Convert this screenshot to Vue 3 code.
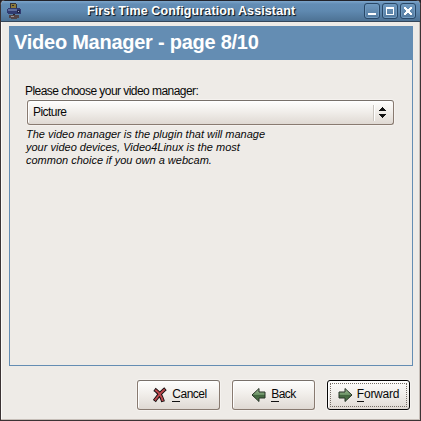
<script setup>
const hint = [
  'The video manager is the plugin that will manage',
  'your video devices, Video4Linux is the most',
  'common choice if you own a webcam.',
]
</script>

<template>
  <div class="window">
    <header class="titlebar">
      <svg class="app-icon" width="16" height="18" viewBox="0 0 16 18" shape-rendering="crispEdges">
        <path d="M4 0h6v1h1v5H4z" fill="#34343c" />
        <path d="M5 1h5v4H5z" fill="#8c7a3c" />
        <path d="M6 2h2v1H6z" fill="#292b35" />
        <path d="M1 6h1V5h12v1h1v5H2v-1H1z" fill="#303b70" />
        <path d="M2 6h9v2H2z" fill="#5d6c9c" />
        <path d="M11 7h3v3h-3z" fill="#202548" />
        <path d="M12 8h1v1h-1z" fill="#a0a8c8" />
        <path d="M7 11h2v3H7z" fill="#29262b" />
        <path d="M3 12h10v3h-2v1H5v-1H3z" fill="#514549" />
        <path d="M5 13h3v1H5z" fill="#a19291" />
      </svg>
      <h1 class="title"><span>First Time Configuration Assistant</span></h1>
      <div class="controls">
        <button class="control" aria-label="Minimize">
          <svg width="14" height="14"><path d="M3 9h8v2H3z" fill="#fff" /></svg>
        </button>
        <button class="control" aria-label="Maximize">
          <svg width="14" height="14"><path d="M3 3h8v8H3zM4 5v5h6V5z" fill="#fff" fill-rule="evenodd" /></svg>
        </button>
        <button class="control" aria-label="Close">
          <svg width="14" height="14"><path d="M3 3h2v1h1v1h2V4h1V3h2v2h-1v1H9v2h1v1h1v2H9v-1H8V9H6v1H5v1H3V9h1V8h1V6H4V5H3z" fill="#fff" /></svg>
        </button>
      </div>
    </header>

    <main class="panel">
      <h2 class="heading"><span>Video Manager - page 8/10</span></h2>
      <section class="content">
        <label class="label"><span>Please choose your video manager:</span></label>
        <button class="combo">
          <span class="value">Picture</span>
          <span class="arrows">
            <svg width="7" height="11" shape-rendering="crispEdges">
              <path d="M3 0h1v1h1v1h1v1h1v1H0V3h1V2h1V1h1zM0 7h7v1H6v1H5v1H4v1H3v-1H2V9H1V8H0z" fill="#111" />
            </svg>
          </span>
        </button>
        <p class="hint"><span v-for="line in hint" :key="line">{{ line }}</span></p>
      </section>
    </main>

    <footer class="actions">
      <button class="action cancel">
        <svg width="14" height="16" viewBox="0 0 14 16">
          <path d="M3 3.5C5 5 8 8 9.5 13M11 3C8.5 5 5 9 2.5 12.5" fill="none" stroke="#171011" stroke-width="3.8" stroke-linecap="square" />
          <path d="M3 3.5C5 5 8 8 9.5 13M11 3C8.5 5 5 9 2.5 12.5" fill="none" stroke="#bd484c" stroke-width="2" stroke-linecap="square" />
        </svg>
        <span class="text"><u>C</u>ancel</span>
      </button>
      <button class="action back">
        <svg width="15" height="16" viewBox="0 0 15 16">
          <defs><linearGradient id="green-back" x2="0" y2="1"><stop stop-color="#a4c19a" /><stop offset=".5" stop-color="#699063" /><stop offset=".51" stop-color="#42663f" /><stop offset="1" stop-color="#557c4d" /></linearGradient></defs>
          <path d="M1 8l7-6.5V5h6v6H8v3.5z" fill="url(#green-back)" stroke="#263326" />
        </svg>
        <span class="text"><u>B</u>ack</span>
      </button>
      <button class="action forward">
        <svg width="15" height="16" viewBox="0 0 15 16">
          <defs><linearGradient id="green-forward" x2="0" y2="1"><stop stop-color="#a4c19a" /><stop offset=".5" stop-color="#699063" /><stop offset=".51" stop-color="#42663f" /><stop offset="1" stop-color="#557c4d" /></linearGradient></defs>
          <path d="M14 8L7 1.5V5H1v6h6v3.5z" fill="url(#green-forward)" stroke="#263326" />
        </svg>
        <span class="text"><u>F</u>orward</span>
      </button>
    </footer>
  </div>
</template>

<style>
body { margin: 0; background: #25232a; }
</style>

<style scoped>
* { box-sizing: border-box; }
.window {
  width: 421px;
  height: 421px;
  display: flex;
  flex-direction: column;
  border: 1px solid #3b3334;
  border-top: 0;
  border-radius: 5px 5px 0 0;
  background: #eeebe7;
  box-shadow: inset -1px -1px #c6beb8, inset 1px 0 #fbfaf8;
  color: #080808;
  font: 12px/13px "Liberation Sans", Arial, sans-serif;
  overflow: hidden;
}
button { margin: 0; font: inherit; color: inherit; }
svg { display: block; flex: none; }
.titlebar {
  flex: none;
  height: 22px;
  display: flex;
  padding: 2px 4px 0 5px;
  border-top: 1px solid #22232a;
  border-bottom: 1px solid #34465a;
  background: linear-gradient(#7ca5cb, #638db5 3px, #5f89b0 10px, #4d7294);
}
.title {
  flex: 1;
  margin: 0;
  padding: 0 0 0 65px;
  color: #fff;
  font: bold 12.5px/17px "Liberation Sans", Arial, sans-serif;
  letter-spacing: 0.12px;
  text-shadow: 1px 1px 1px #14202c, 1px 1px #26384a;
  white-space: nowrap;
}
.controls { display: flex; gap: 2px; }
.control {
  width: 16px;
  height: 16px;
  padding: 0;
  border: 1px solid #294867;
  border-radius: 3px;
  background: linear-gradient(#6f99c0, #547b9f);
  box-shadow: inset 0 0 0 1px #6f99bf;
}
.panel {
  flex: none;
  width: 404px;
  height: 340px;
  margin: 4px 0 0 8px;
  border: 1px solid #648db3;
}
.heading {
  height: 33px;
  margin: 0;
  padding-left: 4px;
  background: #648db3;
  color: #fff;
  font: bold 20px/31px "Liberation Sans", Arial, sans-serif;
  letter-spacing: -0.25px;
  white-space: nowrap;
}
.content { padding: 24px 17px 0 16px; }
.label { display: block; height: 16px; margin-left: -1px; line-height: 14px; letter-spacing: -0.55px; white-space: nowrap; }
.combo {
  width: 367px;
  height: 25px;
  display: flex;
  align-items: center;
  margin-left: 1px;
  padding: 0 7px 0 5px;
  border: 1px solid #887a70;
  border-top-color: #77706a;
  border-radius: 3px;
  background: linear-gradient(#fefefd, #f0ede9 50%, #dfd9d3);
  box-shadow: 0 0 0 1px #f5f2ef, inset 1px 1px #fff;
}
.value { flex: 1; text-align: left; letter-spacing: -0.55px; }
.arrows {
  height: 16px;
  display: flex;
  align-items: center;
  padding-left: 5px;
  border-left: 1px solid #c9c4be;
  box-shadow: inset 1px 0 #fff;
}
.hint {
  display: flex;
  flex-direction: column;
  align-items: flex-start;
  margin: 3px 0 0;
  font: italic 11px/13px "Liberation Sans", Arial, sans-serif;
  white-space: nowrap;
}
.actions { display: flex; gap: 12px; padding: 14px 0 0 136px; }
.action {
  width: 83px;
  height: 30px;
  display: flex;
  align-items: center;
  justify-content: center;
  padding: 0 0 2px;
  border: 1px solid #887a70;
  border-top-color: #77706a;
  border-radius: 3px;
  background: linear-gradient(#fefefd, #f0ede9 50%, #dfd9d3);
  box-shadow: 0 0 0 1px #f5f2ef, inset 1px 1px #fff;
  gap: 5px;
}
.action svg { margin-top: 2px; }
.text { letter-spacing: -0.5px; }
.cancel { padding-left: 3px; }
u { text-decoration: none; border-bottom: 1px solid #111; }
.forward { position: relative; gap: 4px; border-color: #050505; }
.forward .text { letter-spacing: -0.25px; }
.forward::after {
  content: "";
  position: absolute;
  inset: 2px;
  border: 1px dotted #756d66;
}
</style>
